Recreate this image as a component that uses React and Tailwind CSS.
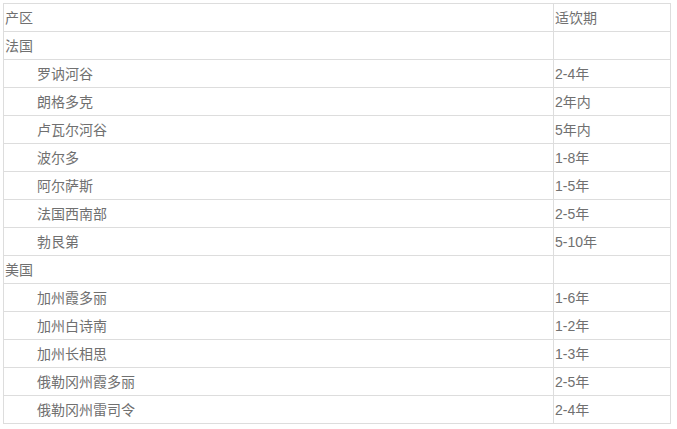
const rows = [
  { region: '产区', period: '适饮期', indent: false },
  { region: '法国', period: '', indent: false },
  { region: '罗讷河谷', period: '2-4年', indent: true },
  { region: '朗格多克', period: '2年内', indent: true },
  { region: '卢瓦尔河谷', period: '5年内', indent: true },
  { region: '波尔多', period: '1-8年', indent: true },
  { region: '阿尔萨斯', period: '1-5年', indent: true },
  { region: '法国西南部', period: '2-5年', indent: true },
  { region: '勃艮第', period: '5-10年', indent: true },
  { region: '美国', period: '', indent: false },
  { region: '加州霞多丽', period: '1-6年', indent: true },
  { region: '加州白诗南', period: '1-2年', indent: true },
  { region: '加州长相思', period: '1-3年', indent: true },
  { region: '俄勒冈州霞多丽', period: '2-5年', indent: true },
  { region: '俄勒冈州雷司令', period: '2-4年', indent: true },
];

export default function App() {
  return (
    <div className="min-h-screen bg-white pt-[3px] pl-[3px] font-['Liberation_Sans','Noto_Sans_CJK_SC',sans-serif] text-[14px] text-[#707070]">
      <div className="w-[668px] border-l border-t border-[#ddd]">
        {rows.map((row) => (
          <div key={row.region} className="flex h-[28px]">
            <div
              className={`flex w-[550px] items-center border-r border-b border-[#ddd] pt-[1px] ${row.indent ? 'pl-[33px]' : 'pl-[1px]'}`}
            >
              {row.region}
            </div>
            <div className="flex w-[117px] items-center border-r border-b border-[#ddd] pt-[1px] pl-[1px]">
              {row.period}
            </div>
          </div>
        ))}
      </div>
    </div>
  );
}
